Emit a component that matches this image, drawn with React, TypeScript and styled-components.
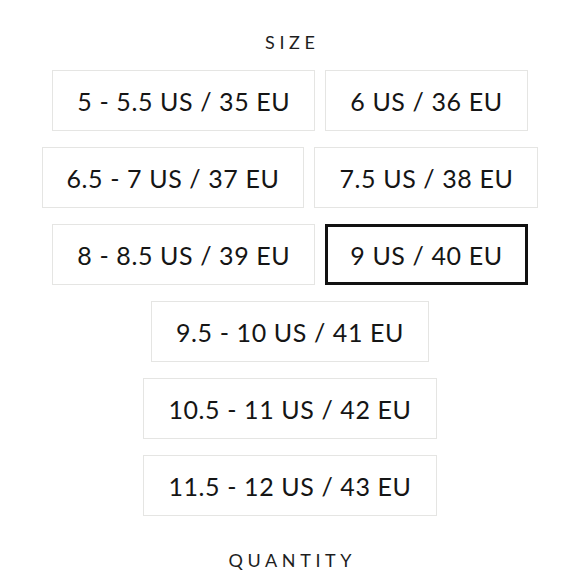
import React from 'react';
import styled, { createGlobalStyle } from 'styled-components';

const GlobalStyle = createGlobalStyle`
  body {
    margin: 0;
    background: #ffffff;
    font-family: 'Lato', 'Liberation Sans', sans-serif;
    color: #1f1f1f;
  }
`;

const Page = styled.div`
  width: 580px;
  display: flex;
  flex-direction: column;
  align-items: center;
  padding-top: 32px;
`;

const SectionLabel = styled.div<{ $top?: number }>`
  font-size: 18px;
  font-weight: 400;
  line-height: 20px;
  letter-spacing: 4.6px;
  margin-right: -4.6px;
  text-transform: uppercase;
  color: #1e1e1e;
  margin-top: ${p => p.$top ?? 0}px;
`;

const SizeGrid = styled.div`
  width: 500px;
  margin-top: 18px;
  display: flex;
  flex-wrap: wrap;
  justify-content: center;
  gap: 16px 10px;
`;

const SizeButton = styled.button<{ $selected?: boolean }>`
  height: 61px;
  box-sizing: border-box;
  padding: 0 ${p => (p.$selected ? 22 : 24)}px;
  background: #fff;
  border: ${p => (p.$selected ? '3px solid #111' : '1px solid #e5e5e3')};
  font-family: inherit;
  font-size: 25px;
  font-weight: 400;
  letter-spacing: 0.6px;
  color: #151515;
  white-space: nowrap;
  cursor: pointer;
`;

const sizes = [
  '5 - 5.5 US / 35 EU',
  '6 US / 36 EU',
  '6.5 - 7 US / 37 EU',
  '7.5 US / 38 EU',
  '8 - 8.5 US / 39 EU',
  '9 US / 40 EU',
  '9.5 - 10 US / 41 EU',
  '10.5 - 11 US / 42 EU',
  '11.5 - 12 US / 43 EU',
];

const App: React.FC = () => {
  const selected = '9 US / 40 EU';

  return (
    <>
      <GlobalStyle />
      <Page>
        <SectionLabel>Size</SectionLabel>
        <SizeGrid>
          {sizes.map(size => (
            <SizeButton key={size} $selected={size === selected}>
              {size}
            </SizeButton>
          ))}
        </SizeGrid>
        <SectionLabel $top={34}>Quantity</SectionLabel>
      </Page>
    </>
  );
};

export default App;
